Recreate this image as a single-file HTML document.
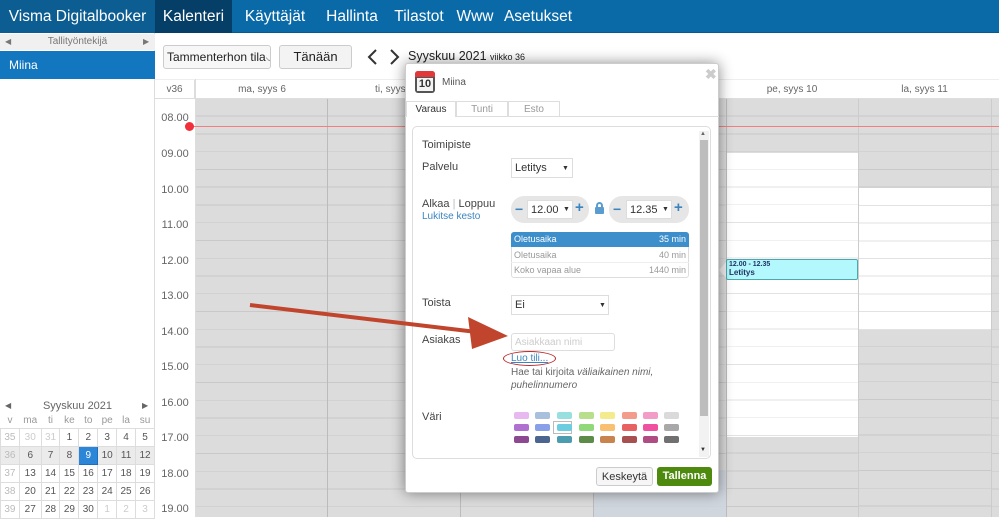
<!DOCTYPE html><html><head><meta charset="utf-8"><style>
*{box-sizing:border-box;margin:0;padding:0}
body{width:999px;height:517px;overflow:hidden;font-family:"Liberation Sans",sans-serif;background:#fff;position:relative;color:#333;white-space:nowrap}
.a{position:absolute}
.nav{left:0;top:0;width:999px;height:33px;background:#0a6aa8;border-bottom:1px solid #075a90}
.nav span{position:absolute;top:0;height:33px;line-height:33px;color:#fff;font-size:15.5px;text-align:center}
.grid{background-color:#dcdcdc;background-image:repeating-linear-gradient(to bottom,transparent 0,transparent 16.75px,#c9c9c9 16.75px,#c9c9c9 17.75px)}
.wgrid{background:#fff;background-image:repeating-linear-gradient(to bottom,transparent 0,transparent 16.75px,#e2e2e2 16.75px,#e2e2e2 17.75px)}
.tl{font-size:11px;color:#666;left:155px;width:40px;text-align:center}
.sw{position:absolute;width:15px;height:7px;border-radius:2px}
.lbl{font-size:11px;color:#444}
</style></head><body>
<div class="a nav">
<span style="left:0;width:155px;background:#0c5d92">Visma Digitalbooker</span>
<span style="left:155px;width:77px;background:#053e66">Kalenteri</span>
<span style="left:232px;width:86px">Käyttäjät</span>
<span style="left:318px;width:68px">Hallinta</span>
<span style="left:386px;width:66px">Tilastot</span>
<span style="left:452px;width:46px">Www</span>
<span style="left:498px;width:80px">Asetukset</span>
</div>
<!-- left panel -->
<div class="a" style="left:0;top:33px;width:155px;height:484px;background:#fff;border-right:1px solid #ddd"></div>
<div class="a" style="left:0;top:34px;width:155px;height:16px;background:#f0f0f0;font-size:10px;color:#777;text-align:center;line-height:16px">Tallityöntekijä<span class="a" style="left:5px;top:0;font-size:8px">◀</span><span class="a" style="left:143px;top:0;font-size:8px">▶</span></div>
<div class="a" style="left:0;top:51px;width:155px;height:28px;background:#1377c0;color:#fff;font-size:12px;line-height:28px;padding-left:9px">Miina</div>
<div class="a" style="left:0;top:398px;width:155px;height:16px;font-size:11px;color:#666;text-align:center;line-height:16px">Syyskuu 2021<span class="a" style="left:5px;font-size:8px">◀</span><span class="a" style="left:142px;font-size:8px">▶</span></div>
<div class="a" style="left:0;top:414px;width:155px;height:103px;font-size:10px;color:#555">
<table style="border-collapse:collapse;width:155px;text-align:center;font-size:10px">
<tr style="height:14px;color:#999"><td>v</td><td>ma</td><td>ti</td><td>ke</td><td>to</td><td>pe</td><td>la</td><td>su</td></tr>
<tr style="height:18px"><td style="color:#bbb;border:1px solid #ddd">35</td><td style="color:#ccc;border:1px solid #ddd">30</td><td style="color:#ccc;border:1px solid #ddd">31</td><td style="border:1px solid #ddd">1</td><td style="border:1px solid #ddd">2</td><td style="border:1px solid #ddd">3</td><td style="border:1px solid #ddd">4</td><td style="border:1px solid #ddd">5</td></tr>
<tr style="height:18px;background:#ebebeb"><td style="color:#bbb;border:1px solid #ddd">36</td><td style="border:1px solid #ddd">6</td><td style="border:1px solid #ddd">7</td><td style="border:1px solid #ddd">8</td><td style="background:#2b86d8;color:#fff;border:1px solid #1a6fc0">9</td><td style="border:1px solid #ddd">10</td><td style="border:1px solid #ddd">11</td><td style="border:1px solid #ddd">12</td></tr>
<tr style="height:18px"><td style="color:#bbb;border:1px solid #ddd">37</td><td style="border:1px solid #ddd">13</td><td style="border:1px solid #ddd">14</td><td style="border:1px solid #ddd">15</td><td style="border:1px solid #ddd">16</td><td style="border:1px solid #ddd">17</td><td style="border:1px solid #ddd">18</td><td style="border:1px solid #ddd">19</td></tr>
<tr style="height:18px"><td style="color:#bbb;border:1px solid #ddd">38</td><td style="border:1px solid #ddd">20</td><td style="border:1px solid #ddd">21</td><td style="border:1px solid #ddd">22</td><td style="border:1px solid #ddd">23</td><td style="border:1px solid #ddd">24</td><td style="border:1px solid #ddd">25</td><td style="border:1px solid #ddd">26</td></tr>
<tr style="height:18px"><td style="color:#bbb;border:1px solid #ddd">39</td><td style="border:1px solid #ddd">27</td><td style="border:1px solid #ddd">28</td><td style="border:1px solid #ddd">29</td><td style="border:1px solid #ddd">30</td><td style="color:#ccc;border:1px solid #ddd">1</td><td style="color:#ccc;border:1px solid #ddd">2</td><td style="color:#ccc;border:1px solid #ddd">3</td></tr>
</table></div>
<!-- toolbar -->
<div class="a" style="left:163px;top:45px;width:108px;height:24px;border:1px solid #ccc;border-radius:3px;background:#f7f7f7;font-size:12px;line-height:22px;padding-left:3px;color:#222;overflow:hidden">Tammenterhon tila<span style="font-size:9px">⌵</span></div>
<div class="a" style="left:279px;top:45px;width:73px;height:24px;border:1px solid #ccc;border-radius:3px;background:#f3f3f3;font-size:13px;line-height:22px;text-align:center;color:#222">Tänään</div>
<svg class="a" style="left:366px;top:48px" width="40" height="18"><path d="M10 2 L3 9 L10 16 M25 2 L32 9 L25 16" stroke="#333" stroke-width="2" fill="none"/></svg>
<div class="a" style="left:408px;top:49px;font-size:12.5px;color:#222">Syyskuu 2021 <span style="font-size:9px">viikko 36</span></div>
<!-- calendar header -->
<div class="a" style="left:155px;top:79px;width:844px;height:20px;border-bottom:1px solid #ddd;border-top:1px solid #eee;font-size:10px;color:#666;line-height:19px">
<span class="a" style="left:0;width:40px;text-align:center;border-right:1px solid #ddd">v36</span>
<span class="a" style="left:41px;width:132px;text-align:center">ma, syys 6</span>
<span class="a" style="left:173px;width:133px;text-align:center">ti, syys 7</span>
<span class="a" style="left:571px;width:132px;text-align:center">pe, syys 10</span>
<span class="a" style="left:703px;width:133px;text-align:center">la, syys 11</span>
</div>
<div class="a" style="left:195px;top:79px;width:1px;height:438px;background:#ddd"></div>
<!-- columns -->
<div class="a grid" style="left:196px;top:99px;width:530px;height:418px"></div>
<div class="a" style="left:594px;top:470px;width:132px;height:47px;background:#cdd5de;opacity:.8"></div>
<div class="a grid" style="left:727px;top:99px;width:131px;height:54px"></div>
<div class="a wgrid" style="left:727px;top:153px;width:131px;height:284px;background-position:0 -1px"></div>
<div class="a grid" style="left:727px;top:437px;width:131px;height:80px;background-position:0 -1px"></div>
<div class="a grid" style="left:859px;top:99px;width:132px;height:89px"></div>
<div class="a wgrid" style="left:859px;top:188px;width:132px;height:142px;background-position:0 0"></div>
<div class="a grid" style="left:859px;top:330px;width:140px;height:187px;background-position:0 -1px"></div>
<div class="a grid" style="left:992px;top:99px;width:7px;height:418px"></div>
<div class="a" style="left:327px;top:99px;width:1px;height:418px;background:#bbb"></div>
<div class="a" style="left:460px;top:99px;width:1px;height:418px;background:#bbb"></div>
<div class="a" style="left:593px;top:99px;width:1px;height:418px;background:#bbb"></div>
<div class="a" style="left:726px;top:99px;width:1px;height:418px;background:#bbb"></div>
<div class="a" style="left:858px;top:99px;width:1px;height:418px;background:#ccc"></div>
<div class="a" style="left:991px;top:99px;width:1px;height:418px;background:#ccc"></div>
<div class="a" style="left:190px;top:126px;width:809px;height:1px;background:#f08080"></div>
<div class="a" style="left:185px;top:122px;width:9px;height:9px;border-radius:50%;background:#f0303a"></div>
<div class="tl a" style="top:112px">08.00</div><div class="tl a" style="top:148px">09.00</div><div class="tl a" style="top:184px">10.00</div><div class="tl a" style="top:219px">11.00</div><div class="tl a" style="top:255px">12.00</div><div class="tl a" style="top:290px">13.00</div><div class="tl a" style="top:326px">14.00</div><div class="tl a" style="top:361px">15.00</div><div class="tl a" style="top:397px">16.00</div><div class="tl a" style="top:432px">17.00</div><div class="tl a" style="top:468px">18.00</div><div class="tl a" style="top:503px">19.00</div>
<!-- event -->
<div class="a" style="left:719px;top:261px;width:0;height:0;border-top:9px solid transparent;border-bottom:9px solid transparent;border-right:8px solid #eee"></div>
<div class="a" style="left:726px;top:259px;width:132px;height:21px;background:#b2f8fc;border:1px solid #4fa7ab;border-radius:2px;font-size:7px;font-weight:bold;color:#236;padding:1px 2px;line-height:8px">12.00 - 12.35<br><span style="font-size:8px">Letitys</span></div>
<!-- modal -->
<div class="a" style="left:405px;top:63px;width:314px;height:430px;background:#fff;border:1px solid #ccc;border-radius:3px;box-shadow:0 0 14px rgba(0,0,0,.45)"></div>
<div class="a" style="left:415px;top:71px;width:20px;height:22px;border-radius:3px;background:#555"></div>
<div class="a" style="left:415px;top:71px;width:20px;height:6px;border-radius:3px 3px 0 0;background:#e2383a"></div>
<div class="a" style="left:417px;top:78px;width:16px;height:13px;background:#f4f4f4;font-size:11px;font-weight:bold;text-align:center;line-height:13px;color:#333">10</div>
<div class="a" style="left:442px;top:77px;font-size:10px;color:#555">Miina</div>
<div class="a" style="left:705px;top:66px;font-size:14px;color:#ccc;font-weight:bold">✖</div>
<div class="a" style="left:405px;top:116px;width:314px;height:1px;background:#ddd"></div>
<div class="a" style="left:406px;top:101px;width:50px;height:16px;background:#fff;border:1px solid #ddd;border-bottom:none;font-size:10px;text-align:center;line-height:16px;color:#333">Varaus</div>
<div class="a" style="left:456px;top:101px;width:52px;height:16px;border:1px solid #ddd;font-size:10px;text-align:center;line-height:16px;color:#999">Tunti</div>
<div class="a" style="left:508px;top:101px;width:52px;height:16px;border:1px solid #ddd;font-size:10px;text-align:center;line-height:16px;color:#999">Esto</div>
<div class="a" style="left:412px;top:126px;width:299px;height:333px;border:1px solid #ddd;border-radius:5px"></div>
<div class="a" style="left:699px;top:131px;width:10px;height:326px;background:#f2f2f2"></div>
<div class="a" style="left:700px;top:140px;width:8px;height:276px;background:#bdbdbd"></div>
<div class="a" style="left:700px;top:131px;font-size:6px;color:#666">▲</div>
<div class="a" style="left:700px;top:447px;font-size:6px;color:#333">▼</div>
<div class="a lbl" style="left:422px;top:139px">Toimipiste</div>
<div class="a lbl" style="left:422px;top:161px">Palvelu</div>
<div class="a" style="left:511px;top:158px;width:62px;height:20px;border:1px solid #ddd;font-size:11px;line-height:19px;padding-left:3px;color:#333">Letitys<span class="a" style="left:50px;font-size:7px">▼</span></div>
<div class="a lbl" style="left:422px;top:198px">Alkaa <span style="color:#bbb">|</span> Loppuu</div>
<div class="a" style="left:422px;top:211px;font-size:10px;color:#3a85c0">Lukitse kesto</div>
<div class="a" style="left:511px;top:196px;width:78px;height:27px;border-radius:13px;background:#e6e6e6"></div>
<div class="a" style="left:609px;top:196px;width:80px;height:27px;border-radius:13px;background:#e6e6e6"></div>
<div class="a" style="left:527px;top:200px;width:46px;height:19px;background:#fff;border:1px solid #ddd;font-size:11px;line-height:18px;padding-left:3px">12.00<span class="a" style="left:35px;font-size:7px">▼</span></div>
<div class="a" style="left:626px;top:200px;width:46px;height:19px;background:#fff;border:1px solid #ddd;font-size:11px;line-height:18px;padding-left:3px">12.35<span class="a" style="left:35px;font-size:7px">▼</span></div>
<div class="a" style="left:515px;top:203px;color:#3a85c0;font-weight:bold;font-size:14px;line-height:12px">−</div>
<div class="a" style="left:575px;top:202px;color:#3a85c0;font-weight:bold;font-size:15px;line-height:12px">+</div>
<div class="a" style="left:613px;top:203px;color:#3a85c0;font-weight:bold;font-size:14px;line-height:12px">−</div>
<div class="a" style="left:674px;top:202px;color:#3a85c0;font-weight:bold;font-size:15px;line-height:12px">+</div>
<div class="a" style="left:595px;top:207px;width:9px;height:7px;background:#5b9cd0;border-radius:1px"></div>
<div class="a" style="left:596px;top:202px;width:7px;height:7px;border:2px solid #5b9cd0;border-bottom:none;border-radius:4px 4px 0 0"></div>
<div class="a" style="left:511px;top:232px;width:178px;height:46px;border:1px solid #ddd;border-radius:3px;font-size:9px;color:#999"></div>
<div class="a" style="left:511px;top:232px;width:178px;height:15px;background:#3d8fcc;border-radius:3px 3px 0 0;color:#fff;font-size:9px;line-height:15px;padding:0 3px">Oletusaika<span style="float:right">35 min</span></div>
<div class="a" style="left:511px;top:248px;width:178px;height:15px;border-bottom:1px solid #eee;color:#999;font-size:9px;line-height:15px;padding:0 3px">Oletusaika<span style="float:right">40 min</span></div>
<div class="a" style="left:511px;top:263px;width:178px;height:15px;color:#999;font-size:9px;line-height:15px;padding:0 3px">Koko vapaa alue<span style="float:right">1440 min</span></div>
<div class="a lbl" style="left:422px;top:297px">Toista</div>
<div class="a" style="left:511px;top:295px;width:98px;height:20px;border:1px solid #ddd;font-size:11px;line-height:19px;padding-left:3px">Ei<span class="a" style="left:87px;font-size:7px">▼</span></div>
<div class="a lbl" style="left:422px;top:334px">Asiakas</div>
<div class="a" style="left:511px;top:333px;width:104px;height:18px;border:1px solid #ddd;border-radius:3px;font-size:10px;line-height:17px;padding-left:3px;color:#ccc">Asiakkaan nimi</div>
<div class="a" style="left:503px;top:351px;width:53px;height:15px;border:1.5px solid #c0282a;border-radius:50%"></div>
<div class="a" style="left:511px;top:353px;font-size:10px;color:#3a85c0;text-decoration:underline">Luo tili...</div>
<div class="a" style="left:511px;top:366px;font-size:10px;color:#666;line-height:13px">Hae tai kirjoita <i>väliaikainen nimi,<br>puhelinnumero</i></div>
<div class="a lbl" style="left:422px;top:411px">Väri</div>
<div class="sw" style="left:514px;top:412px;background:#e8b8f0"></div><div class="sw" style="left:535px;top:412px;background:#a8c0dc"></div><div class="sw" style="left:557px;top:412px;background:#98e0e0"></div><div class="sw" style="left:579px;top:412px;background:#b8e08c"></div><div class="sw" style="left:600px;top:412px;background:#f4ec8c"></div><div class="sw" style="left:622px;top:412px;background:#f49c8c"></div><div class="sw" style="left:643px;top:412px;background:#f49cc8"></div><div class="sw" style="left:664px;top:412px;background:#dadada"></div>
<div class="sw" style="left:514px;top:424px;background:#b070d0"></div><div class="sw" style="left:535px;top:424px;background:#88a0e8"></div><div class="a" style="left:553px;top:421px;width:19px;height:13px;border:1px solid #bbb"></div><div class="sw" style="left:557px;top:424px;background:#6ccce0"></div><div class="sw" style="left:579px;top:424px;background:#90d878"></div><div class="sw" style="left:600px;top:424px;background:#f8c070"></div><div class="sw" style="left:622px;top:424px;background:#e86060"></div><div class="sw" style="left:643px;top:424px;background:#f050a0"></div><div class="sw" style="left:664px;top:424px;background:#a8a8a8"></div>
<div class="sw" style="left:514px;top:436px;background:#8c4890"></div><div class="sw" style="left:535px;top:436px;background:#4c6490"></div><div class="sw" style="left:557px;top:436px;background:#4c9cb0"></div><div class="sw" style="left:579px;top:436px;background:#5c8c48"></div><div class="sw" style="left:600px;top:436px;background:#c8844c"></div><div class="sw" style="left:622px;top:436px;background:#a85050"></div><div class="sw" style="left:643px;top:436px;background:#b04c84"></div><div class="sw" style="left:664px;top:436px;background:#707070"></div>
<div class="a" style="left:596px;top:467px;width:57px;height:19px;border:1px solid #ccc;border-radius:3px;background:#f6f6f6;font-size:11px;text-align:center;line-height:18px;color:#333">Keskeytä</div>
<div class="a" style="left:657px;top:467px;width:55px;height:19px;border-radius:3px;background:#4d8a0e;font-size:11px;text-align:center;line-height:19px;color:#fff;font-weight:bold">Tallenna</div>
<!-- arrow -->
<svg class="a" style="left:240px;top:295px" width="280" height="60"><path d="M10 10 L245 38" stroke="#c0452c" stroke-width="4"/><path d="M228 22 L268 41 L232 54 Z" fill="#c0452c"/></svg>
</body></html>
